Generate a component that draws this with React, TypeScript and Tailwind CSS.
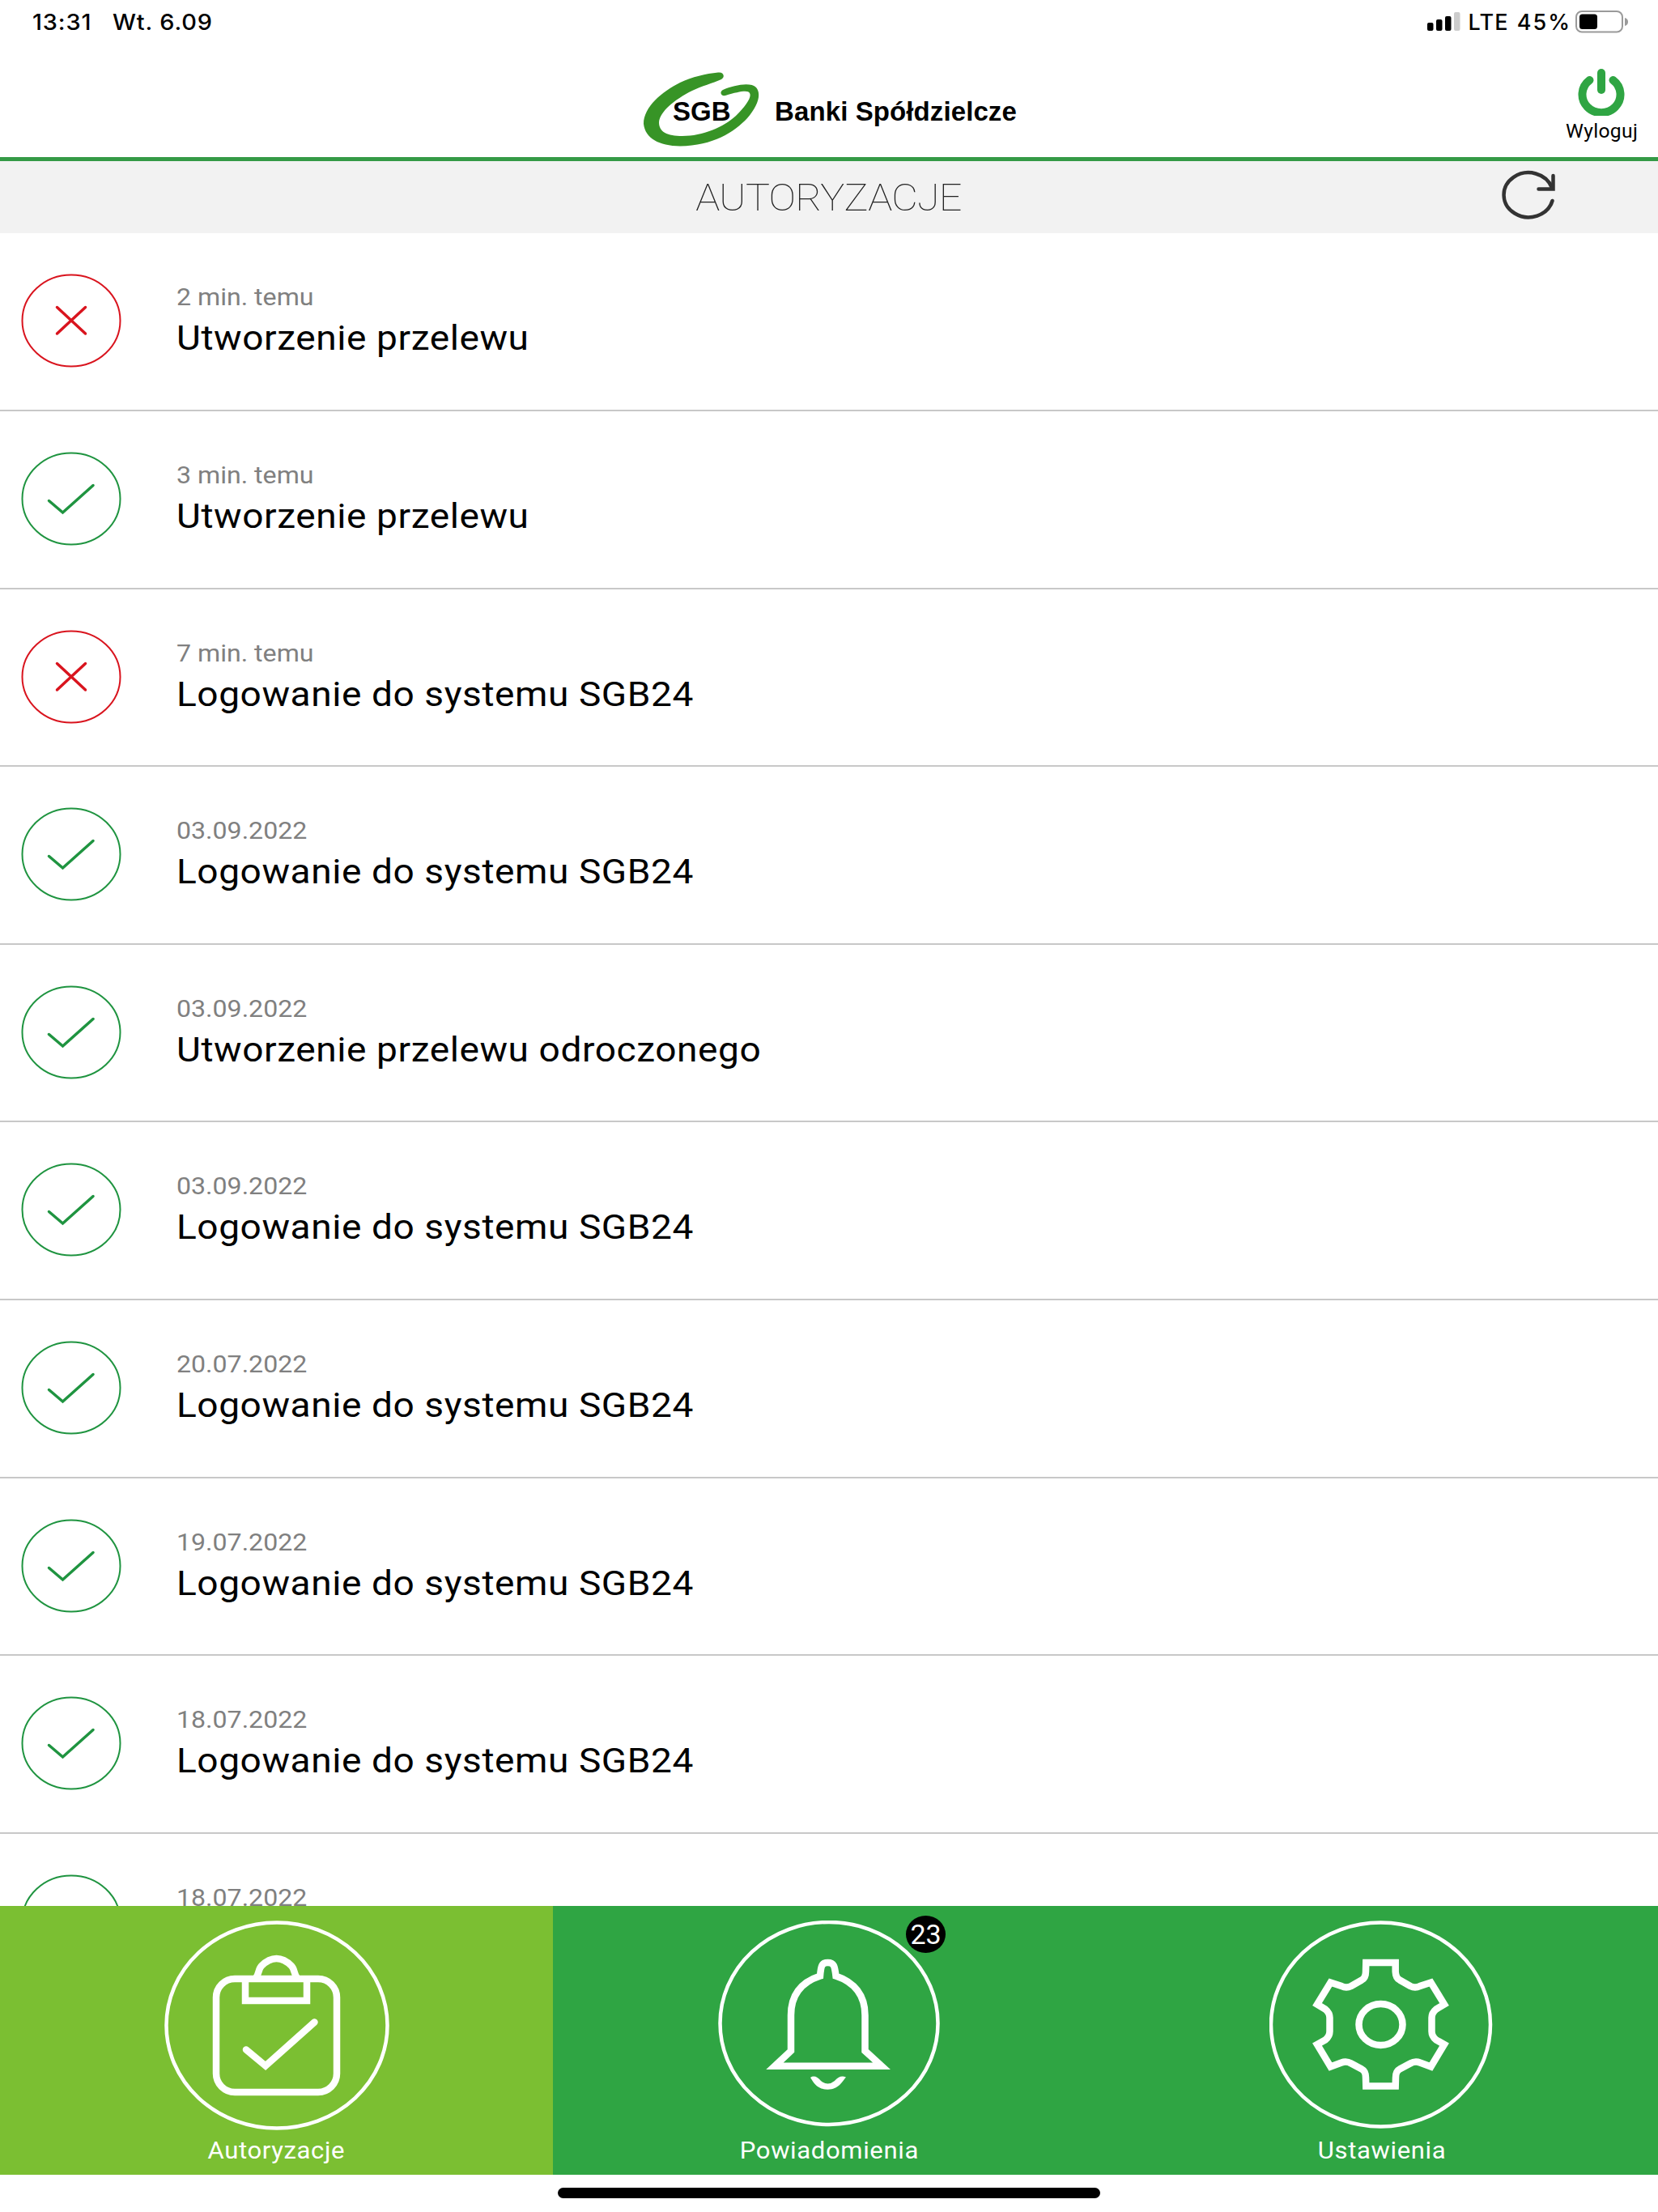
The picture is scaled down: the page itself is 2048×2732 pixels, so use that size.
type Status = "accepted" | "rejected";

interface Authorization {
  id: number;
  status: Status;
  time: string;
  title: string;
}

const authorizations: Authorization[] = [
  { id: 1, status: "rejected", time: "2 min. temu", title: "Utworzenie przelewu" },
  { id: 2, status: "accepted", time: "3 min. temu", title: "Utworzenie przelewu" },
  { id: 3, status: "rejected", time: "7 min. temu", title: "Logowanie do systemu SGB24" },
  { id: 4, status: "accepted", time: "03.09.2022", title: "Logowanie do systemu SGB24" },
  { id: 5, status: "accepted", time: "03.09.2022", title: "Utworzenie przelewu odroczonego" },
  { id: 6, status: "accepted", time: "03.09.2022", title: "Logowanie do systemu SGB24" },
  { id: 7, status: "accepted", time: "20.07.2022", title: "Logowanie do systemu SGB24" },
  { id: 8, status: "accepted", time: "19.07.2022", title: "Logowanie do systemu SGB24" },
  { id: 9, status: "accepted", time: "18.07.2022", title: "Logowanie do systemu SGB24" },
  { id: 10, status: "accepted", time: "18.07.2022", title: "Logowanie do systemu SGB24" },
];

function StatusBar() {
  return (
    <div className="flex h-[54px] shrink-0 items-center justify-between pl-[40px] pr-[36px] font-['Inter',sans-serif] text-[27px] leading-none font-medium text-black">
      <div className="flex origin-left scale-x-107 gap-[24px] tracking-[0.8px]">
        <span>13:31</span>
        <span>Wt. 6.09</span>
      </div>
      <div className="flex items-center">
        <svg width="42" height="24" viewBox="0 0 42 24">
          <rect x="0" y="13" width="7.5" height="10" rx="2" />
          <rect x="11" y="9" width="7.5" height="14" rx="2" />
          <rect x="22" y="5" width="7.5" height="18" rx="2" />
          <rect x="33" y="0" width="7.5" height="23" rx="2" fill="#cccccc" />
        </svg>
        <span className="ml-[9px] tracking-[1.2px]">LTE</span>
        <span className="ml-[10px] tracking-[2px]">45%</span>
        <svg className="ml-[5px]" width="66" height="28" viewBox="0 0 66 28">
          <rect x="1" y="1" width="57" height="25.5" rx="7" fill="none" stroke="#9a9a9a" strokeWidth="2" />
          <rect x="5" y="4.500" width="22" height="18.500" rx="3.500" />
          <path d="M61 9 Q65 10 65 14 Q65 18 61 19Z" fill="#9a9a9a" />
        </svg>
      </div>
    </div>
  );
}

function Logo() {
  return (
    <div className="flex items-center gap-[19px]">
      <div className="relative h-[92px] w-[143px]">
        <svg width="143" height="92" viewBox="0 0 143 92" fill="#379426">
          <path d="M92 .5 C99 -.5 101 6 96 9 C85 14 72 17 60 23 C38 34 20 49 19 62 C19 74 29 79 48 79 C73 79 99 68 114 54 C126 42 134 31 131 26 C129 22 118 24 101 29 C96 30 93 25 98 22 C112 16 132 12 139 19 C146 27 141 42 128 57 C112 74 86 91 45 91.500 C19 91 2 82 0 64 C0 43 23 24 45 13 C60 6 77 2 92 .5Z" />
        </svg>
        <span className="absolute top-[32px] left-[36px] text-[33px] leading-[34px] font-bold text-black">SGB</span>
      </div>
      <span className="mt-[4px] text-[33px] leading-none font-bold tracking-[0.1px] text-black">Banki Spółdzielcze</span>
    </div>
  );
}

function Header() {
  return (
    <header className="grid h-[145px] shrink-0 grid-cols-[1fr_auto_1fr] border-b-[5px] border-[#349a46] font-['Liberation_Sans',sans-serif]">
      <div />
      <div className="mt-[35px] pl-[3px]">
        <Logo />
      </div>
      <button className="mt-[31px] mr-[28px] flex flex-col items-center justify-self-end">
        <svg width="58" height="58" viewBox="0 0 58 58" fill="none" stroke="#2fa543" strokeWidth="10" strokeLinecap="round">
          <path d="M29 5 V26" />
          <path d="M14.500 14 A23.500 22.500 0 1 0 43.500 14" />
        </svg>
        <span className="mt-[7px] scale-x-107 font-['Roboto',sans-serif] text-[23px] leading-[26px] tracking-[0.3px] text-black">
          Wyloguj
        </span>
      </button>
    </header>
  );
}

function TitleBar() {
  return (
    <div className="grid h-[89px] shrink-0 grid-cols-[1fr_auto_1fr] items-start bg-[#f2f2f2]">
      <div />
      <h1 className="mt-[18px] scale-x-107 font-['Roboto',sans-serif] text-[47px] leading-[54px] font-thin tracking-[-0.7px] text-[#222222]">
        AUTORYZACJE
      </h1>
      <button className="mt-[10px] mr-[126px] justify-self-end">
        <svg width="68" height="64" viewBox="0 0 68 64" fill="none" stroke="#333333" strokeWidth="4.500" strokeLinecap="round">
          <path d="M63.500 39 A30.500 27.500 0 1 1 63 23" />
          <path d="M64.500 8 V24.500 H46.500" />
        </svg>
      </button>
    </div>
  );
}

function StatusIcon({ status }: { status: Status }) {
  const color = status === "accepted" ? "#1f9440" : "#d9141e";
  return (
    <svg className="shrink-0" width="124" height="116" viewBox="0 0 124 116" fill="none" stroke={color}>
      <ellipse cx="62" cy="58" rx="60.500" ry="56.500" strokeWidth="2" />
      {status === "accepted" ? (
        <path d="M34.500 60.500 L51.500 75 L89 41.500" strokeWidth="3.500" strokeLinecap="round" />
      ) : (
        <path d="M44.500 41.500 L79.500 74 M79.500 41.500 L44.500 74" strokeWidth="3.500" strokeLinecap="round" />
      )}
    </svg>
  );
}

function AuthorizationRow({ item }: { item: Authorization }) {
  return (
    <li className="flex h-[219.6px] shrink-0 items-start border-b-2 border-[#c8c8c8] pl-[26px] font-['Roboto',sans-serif]">
      <div className="mt-[50px]">
        <StatusIcon status={item.status} />
      </div>
      <div className="mt-[61px] ml-[68px] origin-left scale-x-107">
        <p className="text-[30px] leading-[36px] text-[#808080]">{item.time}</p>
        <p className="mt-[6px] text-[43px] leading-[52px] tracking-[0.55px] text-black">{item.title}</p>
      </div>
    </li>
  );
}

function ClipboardIcon() {
  return (
    <svg className="ml-px" width="278" height="260" viewBox="0 0 278 260" fill="none" stroke="#ffffff" strokeWidth="8.500">
      <ellipse cx="139" cy="129.500" rx="136.500" ry="127" strokeWidth="4.500" />
      <rect x="64" y="72" width="149" height="140" rx="23" />
      <path d="M100 72 V99 H176 V72" />
      <path d="M113 71 C117 66 116 60 120 56 Q129 47 138.500 47 Q148 47 157 56 C161 60 160 66 164 71" />
      <path d="M101 159.500 L125 179.500 L185.500 125.500" strokeLinecap="round" />
    </svg>
  );
}

function BellIcon() {
  return (
    <svg width="274" height="256" viewBox="0 0 274 256" fill="none" stroke="#ffffff" strokeWidth="8.500">
      <ellipse cx="137" cy="127" rx="134.500" ry="125" strokeWidth="4.500" />
      <path
        d="M126 68.500 C127 56 128 52 135.500 52 C143 52 144 56 145.500 68.500 C168 76 181.500 92 181.500 117 V161 L202 179.700 H70 L90 161 V117 C90 92 103 76 126 68.500Z"
        strokeMiterlimit="8"
      />
      <path
        d="M114 194 C118 191 123 193 127 198 Q135.500 205 144 198 C148 193 153 191 158 193.500 C153 199 149 208.700 135.500 208.700 C122 208.700 118 200 114 194Z"
        fill="#ffffff"
        stroke="none"
      />
    </svg>
  );
}

function GearIcon() {
  return (
    <svg className="mr-[2px]" width="276" height="258" viewBox="0 0 276 258" fill="none" stroke="#ffffff" strokeWidth="8.500">
      <ellipse cx="137.500" cy="128.500" rx="135.500" ry="126" strokeWidth="4.500" />
      <path d="M119.300 52 H155.700 V63 Q156 71 161 73.500 L174 81 Q180 84 186 81 L199.500 76.500 L216 103.500 L206 109.500 Q200.500 114 200.500 120 V137 Q200.500 143 206 147.500 L216 153 L199.500 180.500 L186 175.500 Q180 173 174 176.500 L161 183.500 Q156 186 156 194 L155.700 204.500 H119.300 L119 194 Q119 186 114 183.500 L101 176.500 Q95 173 89 175.500 L75.500 180.500 L59 153 L69 147.500 Q74.500 143 74.500 137 V120 Q74.500 114 69 109.500 L59 103.500 L75.500 76.500 L89 81 Q95 84 101 81 L114 73.500 Q119 71 119 63Z" />
      <ellipse cx="137.500" cy="128.500" rx="27" ry="25.500" />
    </svg>
  );
}

const tabs = [
  { label: "Autoryzacje", icon: <ClipboardIcon />, active: true, badge: 0 },
  { label: "Powiadomienia", icon: <BellIcon />, active: false, badge: 23 },
  { label: "Ustawienia", icon: <GearIcon />, active: false, badge: 0 },
];

function TabBar() {
  return (
    <nav className="grid h-[332px] shrink-0 grid-cols-3 bg-[#2fa543]">
      {tabs.map((tab) => (
        <button
          key={tab.label}
          className={`flex flex-col items-center pt-[18px] font-['Roboto',sans-serif] ${tab.active ? "bg-[#7bbf32]" : ""}`}
        >
          <div className="relative h-[260px]">
            {tab.icon}
            {tab.badge > 0 && (
              <span className="absolute -top-[6px] -right-[7px] flex h-[46px] w-[49px] items-center justify-center rounded-[50%] bg-black text-[34px] leading-none text-white">
                {tab.badge}
              </span>
            )}
          </div>
          <span className="mt-[6px] scale-x-107 text-[29px] leading-[36px] tracking-[0.6px] text-white">{tab.label}</span>
        </button>
      ))}
    </nav>
  );
}

export default function App() {
  return (
    <div className="flex h-[2732px] w-[2048px] flex-col overflow-hidden bg-white">
      <StatusBar />
      <Header />
      <TitleBar />
      <ul className="flex min-h-0 flex-1 flex-col overflow-hidden pt-[0.4px]">
        {authorizations.map((item) => (
          <AuthorizationRow key={item.id} item={item} />
        ))}
      </ul>
      <TabBar />
      {/* Home indicator */}
      <div className="flex h-[46px] shrink-0 justify-center pt-[16px]">
        <div className="h-[13px] w-[670px] rounded-full bg-black" />
      </div>
    </div>
  );
}
